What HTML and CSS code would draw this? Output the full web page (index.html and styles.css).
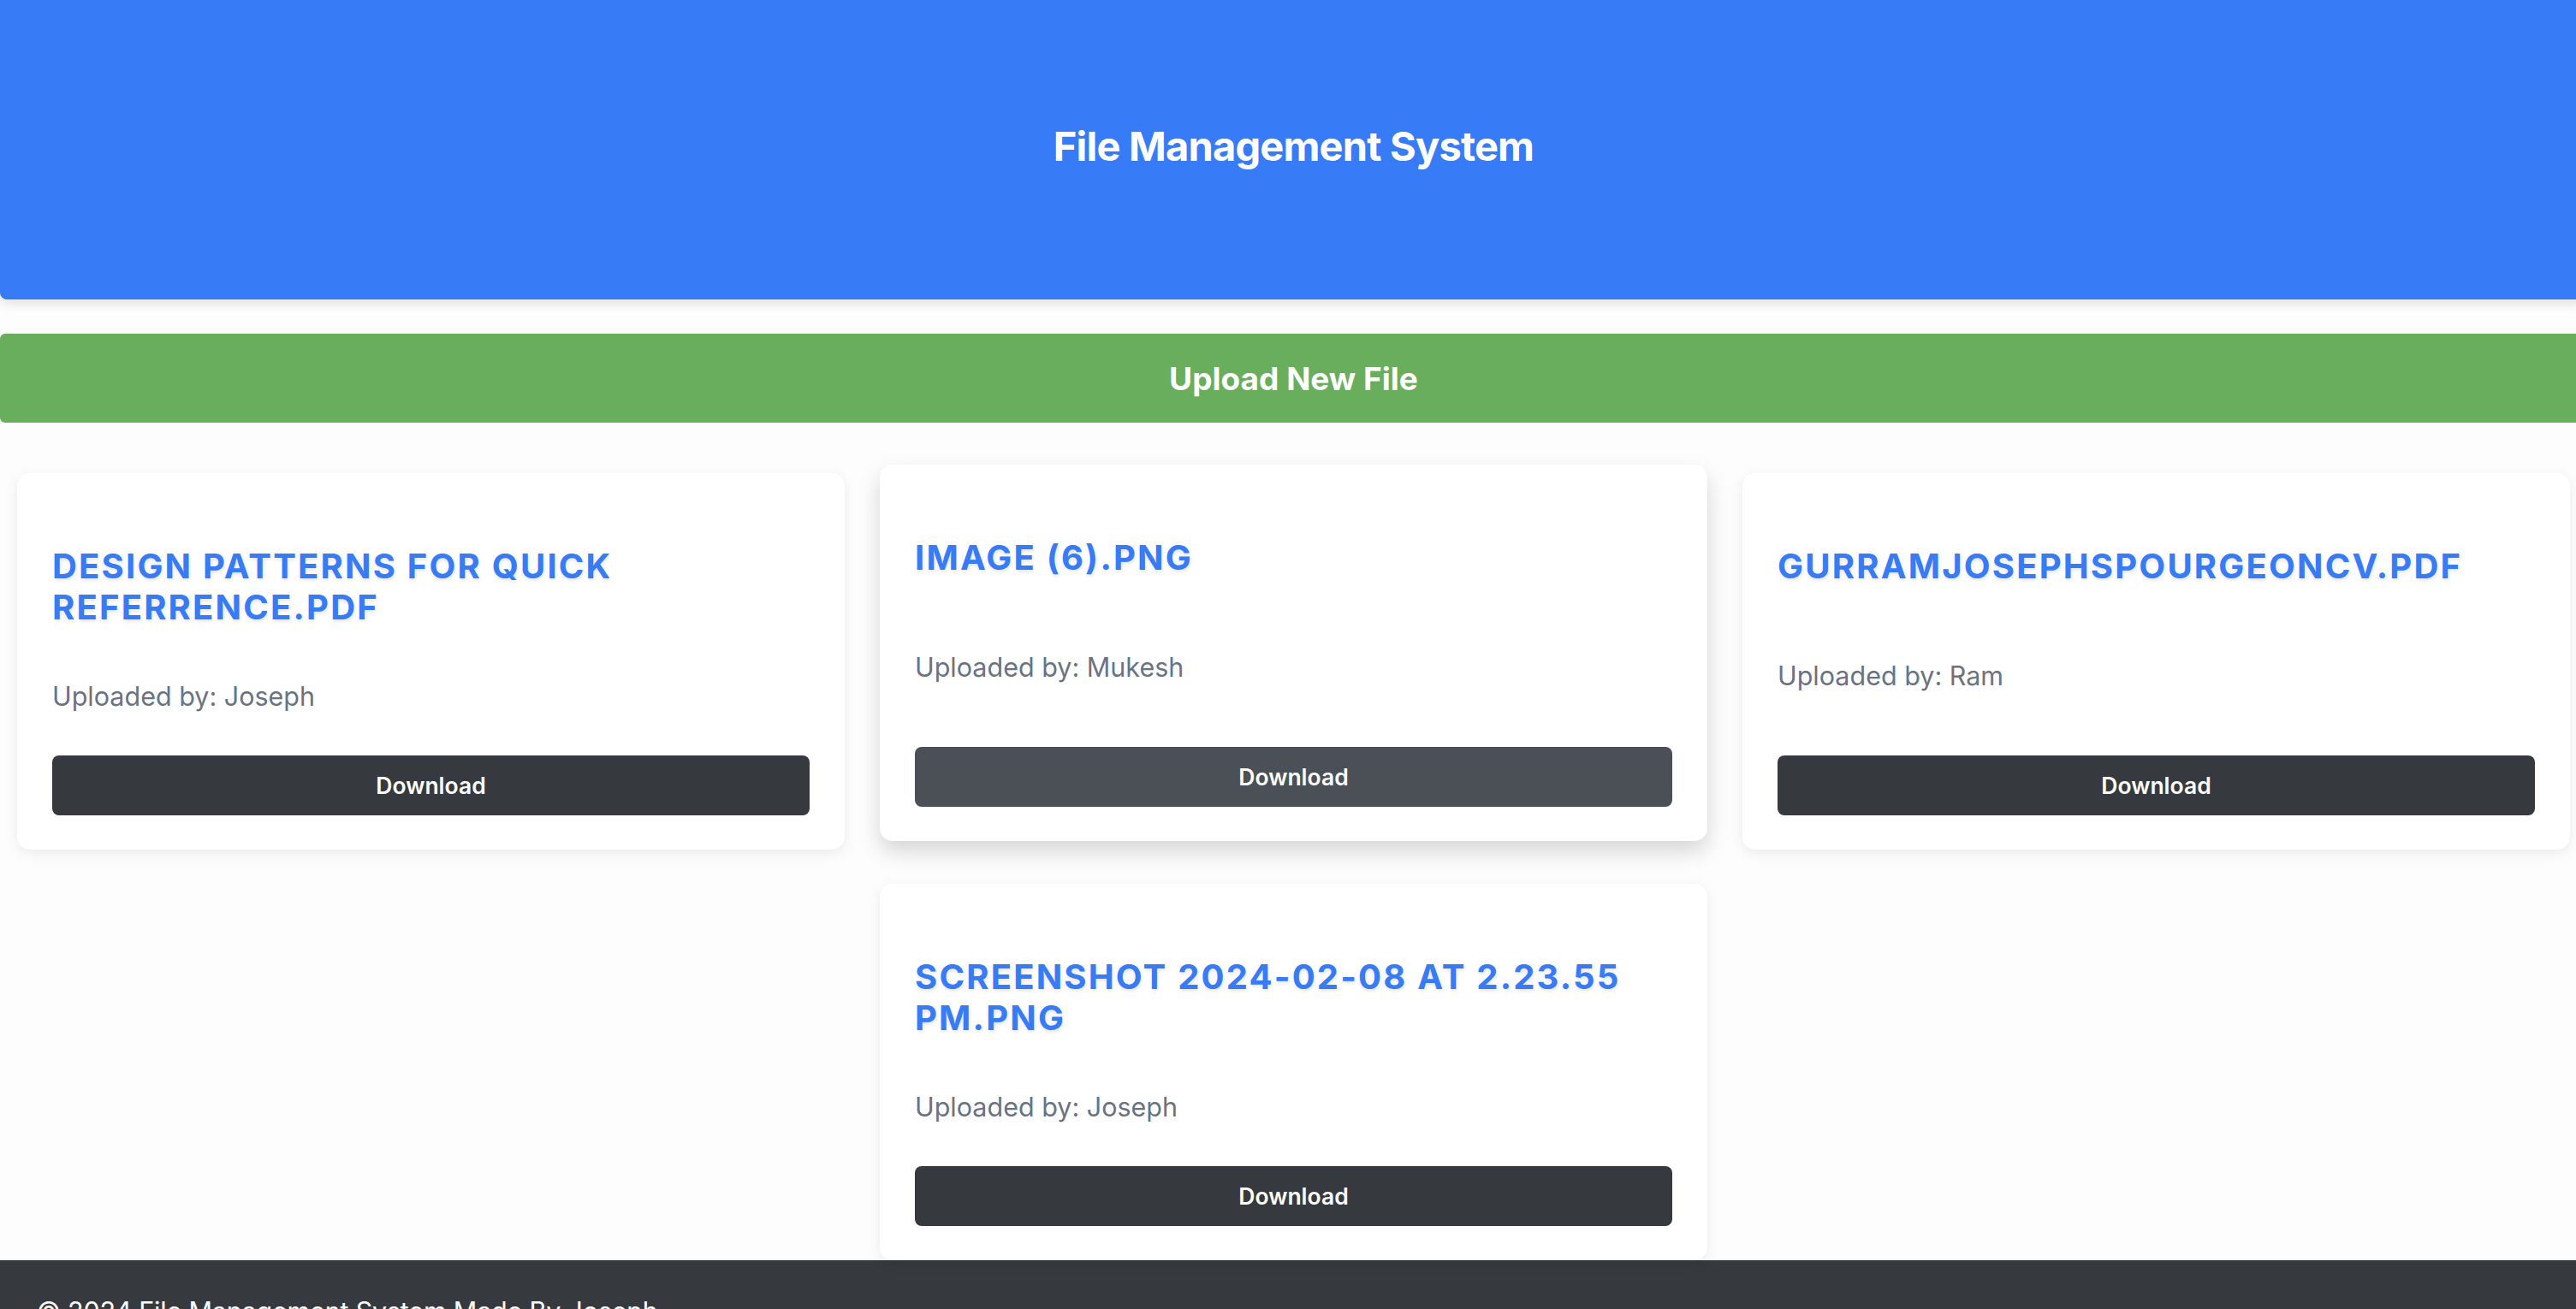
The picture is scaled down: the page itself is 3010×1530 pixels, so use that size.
FILE: index.html
```html
<!DOCTYPE html>
<html lang="en">
<head>
<meta charset="UTF-8">
<title>File Management System</title>
<link rel="stylesheet" href="styles.css">
</head>
<body>
<div class="page">
  <header class="site-header">
    <h1 class="site-title">File Management System</h1>
  </header>

  <a class="upload-bar" href="#">Upload New File</a>

  <main class="file-grid">
    <article class="file-card">
      <h3 class="file-name">Design Patterns for Quick Referrence.pdf</h3>
      <p class="file-owner">Uploaded by: Joseph</p>
      <button class="download-btn">Download</button>
    </article>
    <article class="file-card is-hover">
      <h3 class="file-name">image (6).png</h3>
      <p class="file-owner">Uploaded by: Mukesh</p>
      <button class="download-btn">Download</button>
    </article>
    <article class="file-card">
      <h3 class="file-name">GurramJosephSpourgeonCV.pdf</h3>
      <p class="file-owner">Uploaded by: Ram</p>
      <button class="download-btn">Download</button>
    </article>
    <article class="file-card">
      <h3 class="file-name">Screenshot 2024-02-08 at 2.23.55 PM.png</h3>
      <p class="file-owner">Uploaded by: Joseph</p>
      <button class="download-btn">Download</button>
    </article>
  </main>

  <footer class="site-footer">
    <p class="footer-text">© 2024 File Management System Made By Joseph</p>
  </footer>
</div>
</body>
</html>
```

FILE: styles.css
```css
html, body {
  margin: 0;
  padding: 0;
  overflow: hidden;
}

body {
  background: #fdfdfd;
  font-family: Inter, "Noto Sans", "Liberation Sans", sans-serif;
}

.page {
  width: 3023px;
}

.site-header {
  box-sizing: border-box;
  height: 350px;
  padding-top: 142px;
  background: #377bf6;
  border-radius: 0 0 8px 8px;
  box-shadow: 0 4px 14px rgba(0, 0, 0, 0.12);
  text-align: center;
}

.site-title {
  margin: 0;
  color: #ffffff;
  font-size: 47px;
  font-weight: 700;
  line-height: 58px;
  letter-spacing: -0.8px;
}

.upload-bar {
  box-sizing: border-box;
  display: flex;
  align-items: center;
  justify-content: center;
  height: 104px;
  margin-top: 40px;
  background: #68ae5c;
  border-radius: 6px;
  color: #ffffff;
  font-size: 37px;
  font-weight: 700;
  text-decoration: none;
}

.file-grid {
  display: flex;
  flex-wrap: wrap;
  justify-content: center;
  gap: 40px 41px;
  margin-top: 59px;
  padding: 0 20px;
}

.file-card {
  box-sizing: border-box;
  flex: 0 0 967px;
  display: flex;
  flex-direction: column;
  justify-content: space-between;
  padding: 40px 41px;
  background: #ffffff;
  border-radius: 15px;
  box-shadow: 0 4px 16px rgba(0, 0, 0, 0.08);
}

.file-card.is-hover {
  transform: translateY(-10px);
  box-shadow: 0 12px 26px rgba(0, 0, 0, 0.16);
}

.file-name {
  margin: 45px 0 0;
  color: #377bf6;
  font-size: 40px;
  font-weight: 700;
  line-height: 48px;
  letter-spacing: 2.2px;
  text-transform: uppercase;
  text-shadow: 1px 2px 4px rgba(0, 0, 0, 0.12);
}

.file-owner {
  margin: 62px 0 51px;
  color: #6b7280;
  font-size: 30.5px;
  line-height: 36px;
}

.download-btn {
  height: 70px;
  width: 100%;
  border: none;
  border-radius: 8px;
  background: #363a3e;
  color: #ffffff;
  font-family: Inter, "Noto Sans", "Liberation Sans", sans-serif;
  font-size: 26.5px;
  font-weight: 600;
}

.file-card.is-hover .download-btn {
  background: #4b5057;
}

.site-footer {
  padding: 40px 43px;
  background: #363a3f;
}

.footer-text {
  margin: 0;
  color: #ffffff;
  font-size: 30.5px;
  line-height: 39px;
  letter-spacing: -0.2px;
}
```
